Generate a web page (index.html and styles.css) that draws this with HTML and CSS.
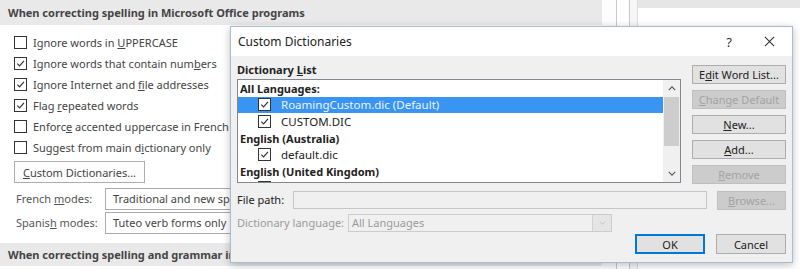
FILE: index.html
```html
<!DOCTYPE html>
<html>
<head>
<meta charset="utf-8">
<link rel="stylesheet" href="styles.css">
</head>
<body>
<div class="screen">
  <div class="options">
    <div class="sect-head"><span>When correcting spelling in Microsoft Office programs</span></div>
    <div class="opts">
      <div class="opt"><span class="cb"></span><span>Ignore words in <u>U</u>PPERCASE</span></div>
      <div class="opt"><span class="cb on"><svg viewBox="0 0 12 12"><path d="M2.5 6.2 L5 8.7 L9.8 3.2"/></svg></span><span>Ignore words that contain num<u>b</u>ers</span></div>
      <div class="opt"><span class="cb on"><svg viewBox="0 0 12 12"><path d="M2.5 6.2 L5 8.7 L9.8 3.2"/></svg></span><span>Ignore Internet and <u>f</u>ile addresses</span></div>
      <div class="opt"><span class="cb on"><svg viewBox="0 0 12 12"><path d="M2.5 6.2 L5 8.7 L9.8 3.2"/></svg></span><span>Flag <u>r</u>epeated words</span></div>
      <div class="opt"><span class="cb"></span><span>Enforc<u>e</u> accented uppercase in French</span></div>
      <div class="opt"><span class="cb"></span><span>Suggest from main d<u>i</u>ctionary only</span></div>
      <div class="btn-row"><span class="wbtn"><span><u>C</u>ustom Dictionaries...</span></span></div>
      <div class="mode-row"><span class="mode-label">French <u>m</u>odes:</span><span class="mode-sel"><span>Traditional and new spellings</span></span></div>
      <div class="mode-row"><span class="mode-label">Spanis<u>h</u> modes:</span><span class="mode-sel"><span>Tuteo verb forms only</span></span></div>
    </div>
    <div class="sect-head bottom"><span>When correcting spelling and grammar in Word</span></div>
  </div>
  <div class="side">
    <div class="side-strip"></div>
    <div class="side-line"></div>
    <div class="side-gap"></div>
    <div class="side-line"></div>
    <div class="side-gap2"></div>
    <div class="side-line light"></div>
    <div class="side-rest"><div class="side-top"></div></div>
  </div>

  <div class="dialog">
    <div class="titlebar">
      <span class="title">Custom Dictionaries</span>
      <span class="tb-help">?</span>
      <span class="tb-close"><svg viewBox="0 0 12 12"><path d="M1 1 L11 11 M11 1 L1 11"/></svg></span>
    </div>
    <div class="dbody">
      <div class="top">
        <div class="listcol">
          <div class="list-label"><span>Dictionary <u>L</u>ist</span></div>
          <div class="listbox">
            <div class="rows">
              <div class="row grp"><span>All Languages:</span></div>
              <div class="row item sel"><span class="lcb"><svg viewBox="0 0 12 12"><path d="M2.5 6.2 L5 8.7 L9.8 3.2"/></svg></span><span>RoamingCustom.dic (Default)</span></div>
              <div class="row item"><span class="lcb"><svg viewBox="0 0 12 12"><path d="M2.5 6.2 L5 8.7 L9.8 3.2"/></svg></span><span>CUSTOM.DIC</span></div>
              <div class="row grp"><span>English (Australia)</span></div>
              <div class="row item"><span class="lcb"><svg viewBox="0 0 12 12"><path d="M2.5 6.2 L5 8.7 L9.8 3.2"/></svg></span><span>default.dic</span></div>
              <div class="row grp"><span>English (United Kingdom)</span></div>
              <div class="row item"><span class="lcb"><svg viewBox="0 0 12 12"><path d="M2.5 6.2 L5 8.7 L9.8 3.2"/></svg></span><span>default.dic</span></div>
            </div>
            <div class="vscroll">
              <span class="arr"><svg viewBox="0 0 10 6"><path d="M1 5 L5 1 L9 5"/></svg></span>
              <span class="thumb"></span>
              <span class="track"></span>
              <span class="arr"><svg viewBox="0 0 10 6"><path d="M1 1 L5 5 L9 1"/></svg></span>
            </div>
          </div>
        </div>
        <div class="btncol">
          <span class="dbtn"><span>E<u>d</u>it Word List...</span></span>
          <span class="dbtn dis"><span><u>C</u>hange Default</span></span>
          <span class="dbtn"><span><u>N</u>ew...</span></span>
          <span class="dbtn"><span><u>A</u>dd...</span></span>
          <span class="dbtn dis"><span><u>R</u>emove</span></span>
        </div>
      </div>
      <div class="path-row">
        <span class="path-label">File path:</span>
        <span class="path-input"></span>
        <span class="dbtn dis browse"><span><u>B</u>rowse...</span></span>
      </div>
      <div class="lang-row">
        <span class="lang-label">Dictionary language:</span>
        <span class="lang-sel"><span class="lang-val">All Languages</span><span class="lang-drop"><svg viewBox="0 0 10 6"><path d="M1 1 L5 5 L9 1"/></svg></span></span>
      </div>
      <div class="ok-row">
        <span class="dbtn ok">OK</span>
        <span class="dbtn">Cancel</span>
      </div>
    </div>
  </div>
</div>
</body>
</html>
```
FILE: styles.css
```css
* { box-sizing: border-box; }
html, body { margin: 0; padding: 0; }
body {
  width: 800px; height: 269px; overflow: hidden;
  font-family: "Segoe UI", "Noto Sans", "Open Sans", sans-serif;
  font-size: 11px; color: #444;
  background: #fff;
}
u { text-decoration: underline; text-underline-offset: 1px; }
span { white-space: nowrap; }
.screen { position: relative; width: 800px; height: 269px; display: flex; }

.options { width: 602px; height: 269px; display: flex; flex-direction: column; background: #fff; }
.sect-head {
  height: 25px; background: #e9e9e9; font-weight: bold; color: #444; font-size: 11px;
  padding-left: 8px; display: flex; align-items: center; flex: none;
}
.sect-head.bottom { margin-top: 9px; height: 23px; }
.opts { padding: 7px 0 0 14px; display: flex; flex-direction: column; }
.opt { height: 21px; display: flex; align-items: center; color: #444; font-size: 11px; }
.cb {
  width: 13px; height: 13px; border: 1px solid #333; background: #fff;
  margin-right: 6px; flex: none; display: flex; align-items: center; justify-content: center;
}
.cb svg, .lcb svg { width: 11px; height: 11px; fill: none; stroke: #333; stroke-width: 1.3; }
.btn-row { margin-top: 3px; height: 24px; display: flex; }
.wbtn {
  border: 1px solid #adadad; background: #fdfdfd; height: 22px; width: 131px; font-size: 11px;
  display: flex; align-items: center; justify-content: center; color: #444;
}
.mode-row { display: flex; align-items: center; margin-top: 2px; height: 23px; font-size: 11px; }
.mode-row + .mode-row { margin-top: 1px; }
.mode-label { width: 91px; padding-left: 2px; color: #555; }
.mode-sel {
  border: 1px solid #ababab; height: 22px; width: 260px; padding-left: 7px;
  display: flex; align-items: center; color: #444; overflow: hidden;
}

.side { flex: 1; display: flex; height: 269px; }
.side-strip { width: 14px; background: #fdfdfd; }
.side-line { width: 1px; background: #c8c8c8; }
.side-line.light { background: #dcdcdc; }
.side-gap { width: 12px; background: #fff; }
.side-gap2 { width: 7px; background: #f7f7f7; }
.side-rest { flex: 1; background: #fff; }
.side-top { height: 8px; background: #e6e6e6; }

.dialog {
  position: absolute; left: 230px; top: 26px; width: 563px; height: 237px;
  border: 1px solid #a9bccf; background: #f0f0f0;
  box-shadow: 0 2px 8px rgba(0,0,0,0.25);
  display: flex; flex-direction: column;
}
.titlebar {
  height: 29px; background: #fff; display: flex; align-items: center;
  padding-left: 7px; color: #222; flex: none;
}
.title { flex: 1; font-size: 12px; }
.tb-help { width: 14px; text-align: center; margin-right: 28px; color: #333; font-size: 13px; }
.tb-close { width: 12px; height: 12px; margin-right: 16px; display: flex; }
.tb-close svg { width: 11px; height: 11px; fill: none; stroke: #333; stroke-width: 1.2; }

.dbody { padding: 0 6px 0 6px; display: flex; flex-direction: column; flex: 1; color: #222; }
.top { display: flex; gap: 11px; }
.listcol { width: 444px; display: flex; flex-direction: column; }
.list-label { height: 23px; font-weight: bold; display: flex; align-items: center; padding-top: 3px; color: #222; }
.listbox {
  height: 104px; border: 1px solid #828790; background: #fff; display: flex; overflow: hidden;
}
.rows { flex: 1; padding-top: 0px; }
.row { height: 16.6px; display: flex; align-items: center; color: #222; }
.row.grp { font-weight: bold; padding-left: 2px; }
.row.item { padding-left: 20px; font-size: 11.5px; }
.row.sel { background: #3a94f2; color: #eaf4ff; }
.lcb {
  width: 13px; height: 13px; border: 1px solid #333; background: #fff; margin-right: 10px;
  display: flex; align-items: center; justify-content: center; flex: none;
}
.vscroll { width: 17px; display: flex; flex-direction: column; background: #f0f0f0; }
.vscroll .arr { height: 17px; display: flex; align-items: center; justify-content: center; }
.vscroll .arr svg { width: 8px; height: 5px; fill: none; stroke: #555; stroke-width: 1.4; }
.thumb { height: 49px; margin: 0 1px; background: #cdcdcd; }
.track { flex: 1; }

.btncol { width: 94px; padding-top: 9px; display: flex; flex-direction: column; gap: 6px; }
.dbtn {
  height: 19px; border: 1px solid #adadad; background: #e1e1e1; color: #222;
  display: flex; align-items: center; justify-content: center;
}
.dbtn.dis { background: #cccccc; border-color: #bfbfbf; color: #a3a3a3; }

.path-row { display: flex; align-items: center; margin-top: 5px; height: 21px; }
.path-label { width: 56px; color: #222; }
.path-input { width: 414px; height: 18px; border: 1px solid #c6c6c6; background: #f0f0f0; }
.browse { width: 69px; margin-left: 10px; margin-top: 2px; }

.lang-row { display: flex; align-items: center; margin-top: 3px; height: 19px; }
.lang-label { width: 111px; color: #9a9a9a; }
.lang-sel {
  width: 264px; height: 18px; border: 1px solid #cccccc; display: flex; align-items: center;
}
.lang-val { flex: 1; padding-left: 3px; color: #9a9a9a; }
.lang-drop { width: 19px; height: 16px; background: #e5e5e5; border-left: 1px solid #d2d2d2; display: flex; align-items: center; justify-content: center; }
.lang-drop svg { width: 7px; height: 4px; fill: none; stroke: #bdbdbd; stroke-width: 1.2; }

.ok-row { display: flex; justify-content: flex-end; gap: 11px; margin-top: 2px; }
.ok-row .dbtn { width: 70px; height: 20px; }
.dbtn.ok { border: 1px solid #0078d7; box-shadow: inset 0 0 0 1px #0078d7; }
```
